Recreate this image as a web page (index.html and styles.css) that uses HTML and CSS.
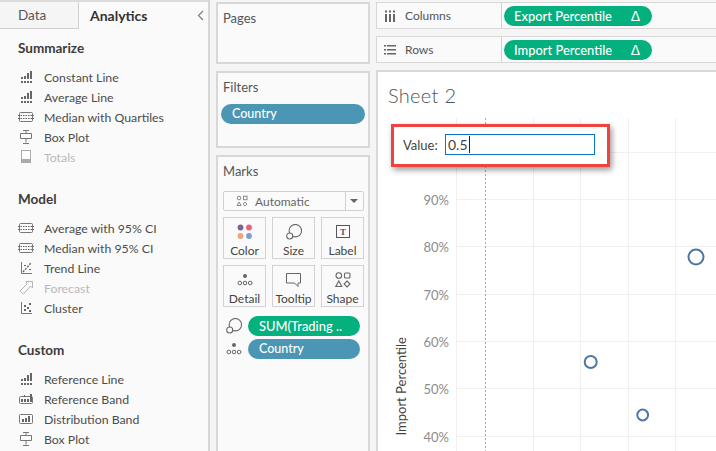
FILE: index.html
```html
<!DOCTYPE html>
<html lang="en">
<head>
<meta charset="utf-8">
<title>Sheet 2</title>
<link rel="stylesheet" href="styles.css">
</head>
<body>
<svg class="defs" width="0" height="0" aria-hidden="true">
  <symbol id="i-bars" viewBox="0 0 16 14">
    <path fill="#666" d="M3 7h2v2H3zM6 6h2v3H6zM9 3h2v6H9zM12 1h2v8h-2zM3 11h2v2H3zM6 11h2v2H6zM9 11h2v2H9zM12 11h2v2h-2z"/>
  </symbol>
  <symbol id="i-band" viewBox="0 0 16 14">
    <rect x="1.5" y="2.5" width="13" height="9" rx="1" fill="none" stroke="#777"/>
    <path stroke="#666" stroke-dasharray="1.5 1" d="M0 5.5h16M0 8.5h16" fill="none"/>
  </symbol>
  <symbol id="i-refband" viewBox="0 0 16 14">
    <rect x="1.5" y="4.5" width="13" height="7" rx="1" fill="none" stroke="#777"/>
    <path fill="#666" d="M3 7h2v3H3zM6 7h2v3H6zM9 7h2v3H9zM12 2h2v8h-2zM6 3h1v2H6z"/>
  </symbol>
  <symbol id="i-distband" viewBox="0 0 16 14">
    <rect x="1.5" y="2.5" width="13" height="9" rx="1" fill="none" stroke="#777"/>
    <path fill="#666" d="M4 7h2v3H4zM7 6h2v4H7zM10 4h2v6h-2z"/>
  </symbol>
  <symbol id="i-box" viewBox="0 0 16 14">
    <path fill="none" stroke="#777" d="M5 .5h6M8 .5v3M2.5 3.5h11v5h-11zM8 8.5v4M5 13.5h6"/>
  </symbol>
  <symbol id="i-totals" viewBox="0 0 16 14">
    <rect x="3.5" y=".5" width="9" height="12" fill="#fff" stroke="#aaa"/>
    <rect x="3" y="9" width="10" height="4" fill="#aaa"/>
  </symbol>
  <symbol id="i-trend" viewBox="0 0 16 14">
    <path fill="none" stroke="#777" d="M3.5 1v11.5H14"/>
    <path fill="none" stroke="#666" stroke-width="1.4" stroke-dasharray="2 1.2" d="M5 11l8-9"/>
    <path fill="#666" d="M6 4h2v1H6zM11 8h2v1h-2z"/>
  </symbol>
  <symbol id="i-forecast" viewBox="0 0 16 14">
    <path fill="none" stroke="#b5b5b5" d="M8 .5h6.5V7L12.5 5 5.500 13 2 10l7-7z"/>
  </symbol>
  <symbol id="i-cluster" viewBox="0 0 16 14">
    <path fill="none" stroke="#777" d="M3.5 1v11.500H14"/>
    <path fill="#666" d="M6 8h2v2H6zM6 4h2v2H6zM9 6h2v2H9zM11 2h2v2h-2zM11 9h2v2h-2z"/>
  </symbol>
  <symbol id="i-size" viewBox="0 0 18 18">
    <circle cx="10.500" cy="7.500" r="7" fill="none" stroke="#666" stroke-width="1.200"/>
    <circle cx="4.200" cy="13.500" r="3.400" fill="#fafafa" stroke="#666" stroke-width="1.200"/>
  </symbol>
  <symbol id="i-detail" viewBox="0 0 16 14">
    <circle cx="8" cy="3" r="2" fill="#666"/>
    <g fill="none" stroke="#666"><circle cx="2.800" cy="10" r="1.800"/><circle cx="8" cy="10" r="1.800"/><circle cx="13.200" cy="10" r="1.800"/></g>
  </symbol>
</svg>

<aside class="analytics">
  <div class="tabs">
    <div class="tab tab-data">Data</div>
    <div class="tab tab-active">Analytics</div>
    <svg class="collapse" width="7" height="11" viewBox="0 0 7 11"><path d="M6 1L1.500 5.500 6 10" fill="none" stroke="#777" stroke-width="1.100"/></svg>
  </div>
  <section class="group">
    <h2>Summarize</h2>
    <ul>
      <li><svg class="ico"><use href="#i-bars"/></svg>Constant Line</li>
      <li><svg class="ico"><use href="#i-bars"/></svg>Average Line</li>
      <li><svg class="ico"><use href="#i-band"/></svg>Median with Quartiles</li>
      <li><svg class="ico"><use href="#i-box"/></svg>Box Plot</li>
      <li class="off"><svg class="ico"><use href="#i-totals"/></svg>Totals</li>
    </ul>
  </section>
  <section class="group">
    <h2>Model</h2>
    <ul>
      <li><svg class="ico"><use href="#i-band"/></svg>Average with 95% CI</li>
      <li><svg class="ico"><use href="#i-band"/></svg>Median with 95% CI</li>
      <li><svg class="ico"><use href="#i-trend"/></svg>Trend Line</li>
      <li class="off"><svg class="ico"><use href="#i-forecast"/></svg>Forecast</li>
      <li><svg class="ico"><use href="#i-cluster"/></svg>Cluster</li>
    </ul>
  </section>
  <section class="group group-last">
    <h2>Custom</h2>
    <ul>
      <li><svg class="ico"><use href="#i-bars"/></svg>Reference Line</li>
      <li><svg class="ico"><use href="#i-refband"/></svg>Reference Band</li>
      <li><svg class="ico"><use href="#i-distband"/></svg>Distribution Band</li>
      <li><svg class="ico"><use href="#i-box"/></svg>Box Plot</li>
    </ul>
  </section>
</aside>

<div class="cards">
  <section class="card card-pages"><h3>Pages</h3></section>
  <section class="card card-filters">
    <h3>Filters</h3>
    <div class="pill pill-blue pill-filter">Country</div>
  </section>
  <section class="card card-marks">
    <h3>Marks</h3>
    <div class="select">
      <svg class="select-ico" width="12" height="12" viewBox="0 0 12 12"><g fill="none" stroke="#888"><circle cx="3" cy="3" r="1.800"/><rect x="7.500" y="1.200" width="3.500" height="3.500"/><path d="M3 7l2 3.500H1z"/><path d="M9 7l2 2-2 2-2-2z"/></g></svg>
      <span class="select-label">Automatic</span>
      <span class="select-arrow"></span>
    </div>
    <div class="mark-grid">
      <div class="mark-btn">
        <svg width="16" height="16" viewBox="0 0 16 16"><circle cx="3.500" cy="3.500" r="2.900" fill="#7b648e"/><circle cx="12" cy="3.500" r="2.900" fill="#e8607a"/><circle cx="3.500" cy="12" r="2.900" fill="#f0a37c"/><circle cx="12" cy="12" r="2.900" fill="#7d9fc9"/></svg>
        <span>Color</span>
      </div>
      <div class="mark-btn">
        <svg width="16" height="16"><use href="#i-size"/></svg>
        <span>Size</span>
      </div>
      <div class="mark-btn">
        <svg width="14" height="14" viewBox="0 0 14 14"><rect x=".5" y=".5" width="13" height="12" fill="none" stroke="#555"/><text x="7" y="10" text-anchor="middle" class="t-glyph">T</text></svg>
        <span>Label</span>
      </div>
      <div class="mark-btn">
        <svg width="16" height="16"><use href="#i-detail"/></svg>
        <span>Detail</span>
      </div>
      <div class="mark-btn">
        <svg width="16" height="16" viewBox="0 0 16 16"><path d="M.5 1.500h14v9.500h-2.500v3.500L8.500 11H.5z" fill="none" stroke="#666"/></svg>
        <span>Tooltip</span>
      </div>
      <div class="mark-btn">
        <svg width="16" height="16" viewBox="0 0 16 16"><g fill="none" stroke="#666" stroke-width="1.100"><circle cx="3.800" cy="3.500" r="2.800"/><rect x="9.500" y="1" width="5.500" height="5" rx="1"/><path d="M3.800 9l3 5.500H.8z"/><path d="M12 9l3 3-3 3-3-3z"/></g></svg>
        <span>Shape</span>
      </div>
    </div>
    <div class="encoding">
      <svg class="enc-ico" width="16" height="16"><use href="#i-size"/></svg>
      <div class="pill pill-green pill-enc">SUM(Trading ..</div>
    </div>
    <div class="encoding">
      <svg class="enc-ico" width="16" height="16"><use href="#i-detail"/></svg>
      <div class="pill pill-blue pill-enc">Country</div>
    </div>
  </section>
</div>

<main class="workspace">
  <div class="shelf">
    <div class="shelf-label">
      <svg width="12" height="12" viewBox="0 0 12 12"><path fill="#666" d="M1 4h2v8H1zM5 4h2v8H5zM9 4h2v8H9zM1 .500h2v2H1zM5 .500h2v2H5zM9 .500h2v2H9z"/></svg>
      <span>Columns</span>
    </div>
    <div class="shelf-body"><div class="pill pill-green pill-shelf"><span>Export Percentile</span><span class="delta">&#916;</span></div></div>
  </div>
  <div class="shelf">
    <div class="shelf-label">
      <svg width="12" height="12" viewBox="0 0 12 12"><path fill="#666" d="M0 1h2v1.500H0zM3 1h9v1.500H3zM0 5h2v1.500H0zM3 5h9v1.500H3zM0 9h2v1.500H0zM3 9h9v1.500H3z"/></svg>
      <span>Rows</span>
    </div>
    <div class="shelf-body"><div class="pill pill-green pill-shelf"><span>Import Percentile</span><span class="delta">&#916;</span></div></div>
  </div>
  <section class="view">
    <h1>Sheet 2</h1>
    <svg class="chart" width="340" height="333" viewBox="376 118 340 333">
      <g class="grid">
        <path d="M456.500 118V451M533.500 118V451M580.500 118V451M628.500 118V451M675.500 118V451"/>
        <path d="M456 152.500H716M456 199.500H716M456 246.500H716M456 294.500H716M456 341.500H716M456 388.500H716M456 436.500H716"/>
      </g>
      <path class="refline" d="M485.500 118V451"/>
      <g class="ylabels">
        <text x="449" y="205">90%</text>
        <text x="449" y="252">80%</text>
        <text x="449" y="300">70%</text>
        <text x="449" y="347">60%</text>
        <text x="449" y="394">50%</text>
        <text x="449" y="442">40%</text>
      </g>
      <text class="axis-title" transform="translate(406 435.500) rotate(-90)">Import Percentile</text>
      <g class="marks">
        <circle cx="696" cy="257" r="7.500"/>
        <circle cx="590.700" cy="362" r="6"/>
        <circle cx="642.700" cy="415" r="5.400"/>
      </g>
    </svg>
    <div class="param">
      <label class="param-label">Value:</label>
      <div class="param-input">0.5<i class="caret"></i></div>
    </div>
  </section>
</main>
</body>
</html>
```

FILE: styles.css
```css
* { box-sizing: border-box; }
html, body { margin: 0; height: 100%; }
body {
  width: 716px;
  height: 451px;
  overflow: hidden;
  display: flex;
  background: #f5f5f5;
  font-family: Lato, "Liberation Sans", sans-serif;
  font-size: 12px;
  color: #444;
}
.defs { position: absolute; }
h1, h2, h3, ul { margin: 0; padding: 0; font-weight: 400; }
ul { list-style: none; }

/* Analytics pane */
.analytics {
  width: 210px;
  flex: none;
  height: 451px;
  overflow: hidden;
  background: #fafafa;
  border-right: 2px solid #d6d6d6;
  border-top: 2px solid #dcdcdc;
}
.tabs {
  display: flex;
  align-items: center;
  height: 27px;
  position: relative;
}
.tab { height: 100%; font-size: 13.500px; line-height: 27px; }
.tab-data {
  width: 79px;
  padding-left: 18px;
  background: #f5f5f5;
  border-right: 1px solid #d0d0d0;
  border-bottom: 1px solid #d0d0d0;
  color: #555;
}
.tab-active { padding-left: 11px; font-size: 14px; font-weight: 700; color: #333; }
.collapse { position: absolute; right: 4px; top: 8px; }
.group { padding: 9px 0 13px 18px; }
.group-last { padding-bottom: 0; }
.group h2 {
  font-size: 13.500px;
  font-weight: 700;
  line-height: 20px;
  color: #3c3c3c;
  margin-bottom: 9px;
}
.group li {
  display: flex;
  align-items: center;
  height: 20px;
  font-size: 12.300px;
  color: #4c4c4c;
}
.group li.off { color: #b9b9b9; }
.ico { width: 16px; height: 14px; margin-right: 10px; flex: none; }

/* Pages / Filters / Marks */
.cards {
  width: 166px;
  flex: none;
  height: 451px;
  padding: 2px 6px 0 6px;
  display: flex;
  flex-direction: column;
  gap: 7px;
}
.card {
  flex: none;
  background: #fafafa;
  border: 2px solid #d8d8d8;
  padding: 5px 4px 0 5px;
}
.card h3 { font-size: 13px; line-height: 18px; color: #555; }
.card-pages { height: 62px; }
.card-filters { height: 77px; }
.card-marks { flex: 1; border-bottom: 0; }
.pill {
  border-radius: 10px;
  height: 20px;
  line-height: 20px;
  color: #fff;
  font-size: 12.500px;
  font-weight: 500;
  padding-left: 11px;
}
.pill-blue { background: #4c96b5; }
.pill-green { background: #03b07e; font-size: 12.900px; }
.pill-filter { margin: 8px -1px 0 -2px; }

.select {
  display: flex;
  align-items: center;
  height: 20px;
  margin-top: 11px;
  border: 1px solid #d0d0d0;
  border-radius: 2px;
  background: #fbfbfb;
  position: relative;
}
.select-ico { margin-left: 12px; }
.select-label { margin-left: 7px; color: #666; flex: 1; }
.select-arrow {
  width: 18px;
  height: 100%;
  border-left: 1px solid #d0d0d0;
  position: relative;
}
.select-arrow::after {
  content: "";
  position: absolute;
  left: 4px;
  top: 7px;
  border: 4px solid transparent;
  border-top: 4px solid #666;
  border-bottom: 0;
}
.mark-grid {
  display: grid;
  grid-template-columns: repeat(3, 1fr);
  gap: 6px;
  margin-top: 6px;
}
.mark-btn {
  height: 42px;
  border: 1px solid #d2d2d2;
  display: flex;
  flex-direction: column;
  align-items: center;
  padding-top: 6px;
  background: #fafafa;
}
.mark-btn svg { height: 16px; flex: none; }
.mark-btn span { font-size: 12px; line-height: 15px; margin-top: 3px; color: #444; }
.t-glyph { font: 700 9px "Liberation Serif", serif; fill: #555; }
.encoding { display: flex; align-items: center; margin: 3px 4px 0 0; }
.mark-grid + .encoding { margin-top: 9px; }
.enc-ico { margin-left: 3px; margin-right: 6px; flex: none; }
.pill-enc { flex: 1; }

/* Workspace */
.workspace {
  flex: 1;
  min-width: 0;
  display: flex;
  flex-direction: column;
  padding-top: 2px;
  gap: 7px;
}
.shelf {
  display: flex;
  height: 27px;
  flex: none;
  background: #fafafa;
  border: 1px solid #d8d8d8;
  border-right: 0;
}
.shelf-label {
  width: 125px;
  flex: none;
  display: flex;
  align-items: center;
  gap: 9px;
  padding-left: 7px;
  border-right: 1px solid #d0d0d0;
  color: #555;
  font-size: 12px;
}
.shelf-body { flex: 1; padding: 3px 0 0 2px; }
.pill-shelf {
  width: 148px;
  display: flex;
  justify-content: space-between;
  padding: 0 12px 0 10px;
}
.delta { font-family: "Liberation Sans", sans-serif; font-size: 14px; }
.view {
  flex: 1;
  background: #fff;
  border: 2px solid #d8d8d8;
  border-right: 0;
  border-bottom: 0;
  position: relative;
  min-height: 0;
  overflow: hidden;
}
.view h1 {
  font-size: 20px;
  font-weight: 300;
  line-height: 26px;
  color: #555;
  padding: 10px 0 0 10px;
  letter-spacing: .3px;
}
.chart { display: block; margin: 10px 0 0 -2px; }
.grid path { stroke: #f0f0f0; fill: none; }
.refline { stroke: #aaa; stroke-dasharray: 2 2; fill: none; }
.ylabels text { font-size: 13px; fill: #8c8c8c; text-anchor: end; }
.axis-title { font-size: 13px; font-weight: 400; fill: #444; }
.marks circle { fill: none; stroke: #4e76a5; stroke-width: 2; }
.param {
  position: absolute;
  left: 13px;
  top: 52px;
  width: 219px;
  height: 43px;
  background: #fff;
  border: 3px solid #f0423f;
  box-shadow: 2px 3px 6px rgba(0, 0, 0, .4);
  display: flex;
  align-items: center;
  padding: 0 0 2px 9px;
}
.param-label { font-size: 13px; color: #444; width: 42px; flex: none; }
.param-input {
  width: 150px;
  height: 21px;
  border: 1px solid #0a72c8;
  font-size: 14px;
  line-height: 19px;
  padding-left: 2px;
  color: #444;
  display: flex;
  align-items: center;
}
.caret { width: 1px; height: 17px; background: #222; margin-left: 1px; }
```
